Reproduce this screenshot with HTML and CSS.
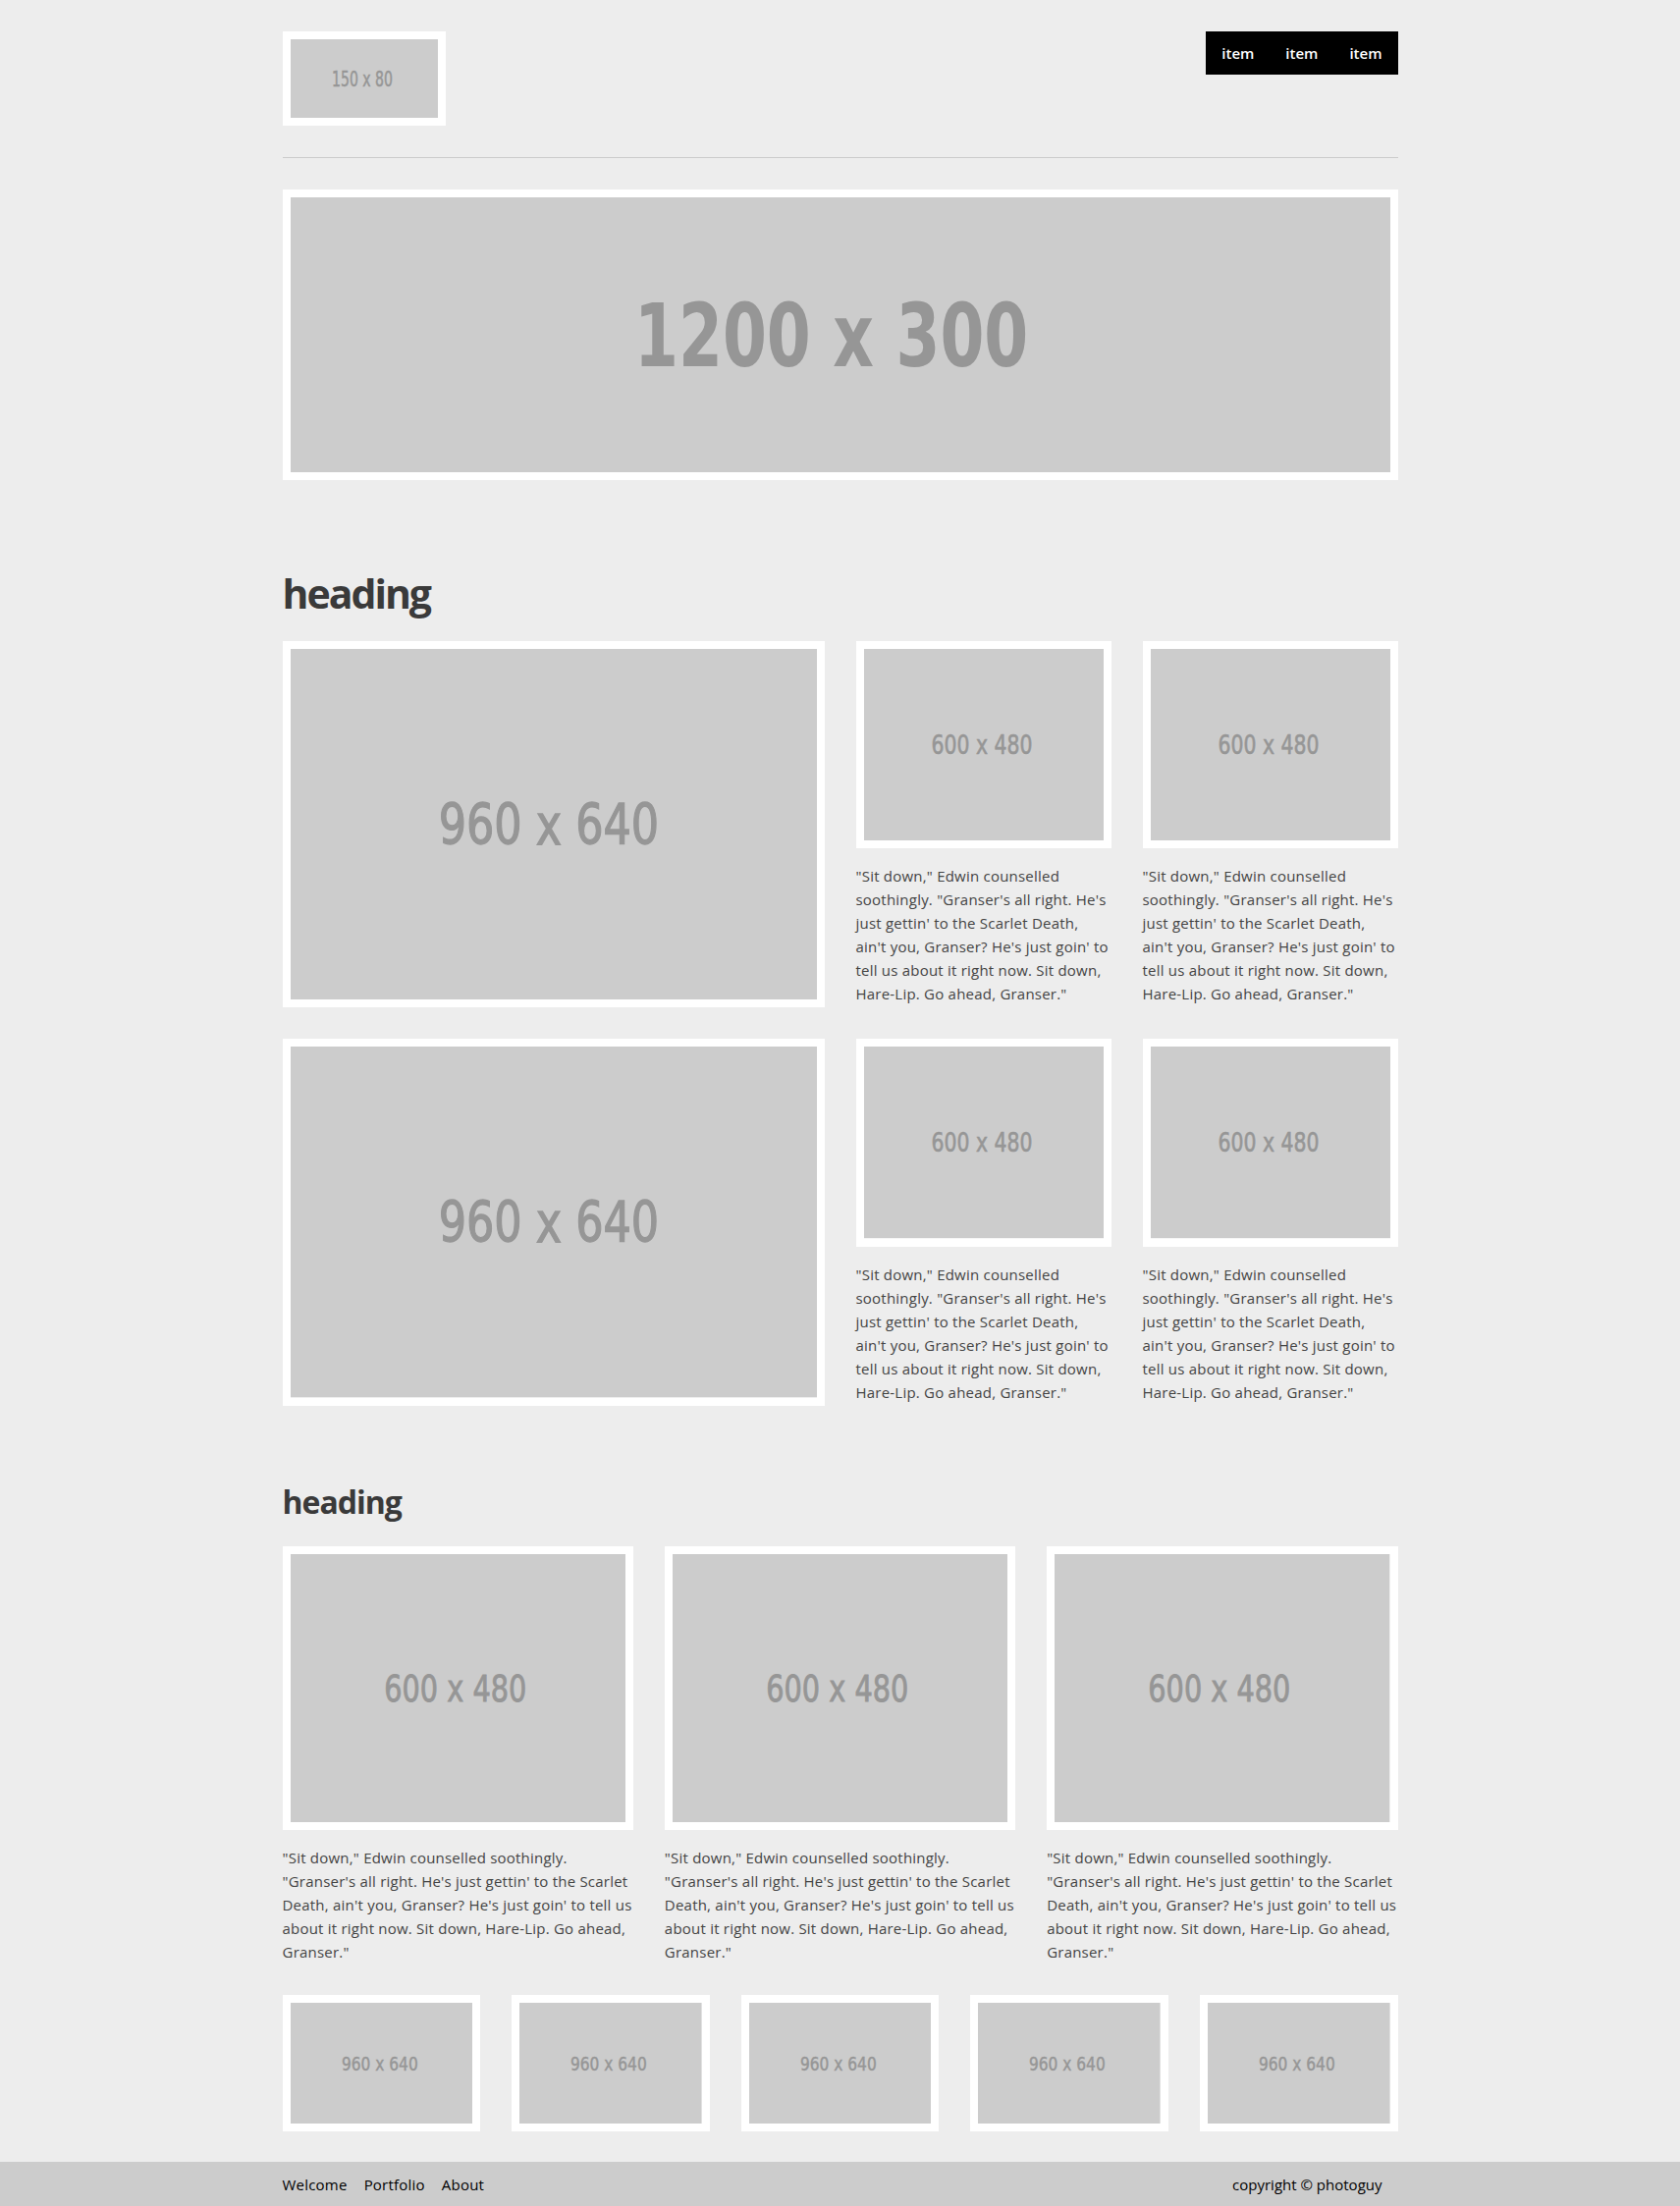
FILE: index.html
```html
<!DOCTYPE html>
<html lang="en">
<head>
<meta charset="utf-8">
<title>photoguy</title>
<link rel="stylesheet" href="styles.css">
</head>
<body>
<div class="wrap">
  <header class="site-header">
    <a class="frame logo" href="#">
      <svg class="ph" viewBox="0 0 150 80" width="150" height="80"><rect width="150" height="80" fill="#cccccc"/><text x="73" y="47.8" text-anchor="middle" font-size="21.5" textLength="62" lengthAdjust="spacingAndGlyphs" class="ph-text">150 x 80</text></svg>
    </a>
    <nav class="nav">
      <a href="#">item</a>
      <a href="#">item</a>
      <a href="#">item</a>
    </nav>
  </header>
  <hr class="rule">

  <div class="frame hero">
    <svg class="ph" viewBox="0 0 1200 300" width="1200" height="300"><rect width="1200" height="300" fill="#cccccc"/><text x="590" y="184.8" text-anchor="middle" font-size="95.5" textLength="430" lengthAdjust="spacingAndGlyphs" class="ph-text ph-bold">1200 x 300</text></svg>
  </div>

  <section class="section">
    <h1 class="title-lg">heading</h1>
    <div class="feature-rows">
      <div class="feature-row">
        <div class="frame"><svg class="ph" viewBox="0 0 960 640" width="960" height="640"><rect width="960" height="640" fill="#cccccc"/><text x="471" y="357.3" text-anchor="middle" font-size="102" textLength="402" lengthAdjust="spacingAndGlyphs" class="ph-text">960 x 640</text></svg></div>
        <div class="card">
          <div class="frame"><svg class="ph" viewBox="0 0 600 480" width="600" height="480"><rect width="600" height="480" fill="#cccccc"/><text x="295" y="264.2" text-anchor="middle" font-size="66.5" textLength="253" lengthAdjust="spacingAndGlyphs" class="ph-text">600 x 480</text></svg></div>
          <p class="caption">"Sit down," Edwin counselled soothingly. "Granser's all right. He's just gettin' to the Scarlet Death, ain't you, Granser? He's just goin' to tell us about it right now. Sit down, Hare-Lip. Go ahead, Granser."</p>
        </div>
        <div class="card">
          <div class="frame"><svg class="ph" viewBox="0 0 600 480" width="600" height="480"><rect width="600" height="480" fill="#cccccc"/><text x="295" y="264.2" text-anchor="middle" font-size="66.5" textLength="253" lengthAdjust="spacingAndGlyphs" class="ph-text">600 x 480</text></svg></div>
          <p class="caption">"Sit down," Edwin counselled soothingly. "Granser's all right. He's just gettin' to the Scarlet Death, ain't you, Granser? He's just goin' to tell us about it right now. Sit down, Hare-Lip. Go ahead, Granser."</p>
        </div>
      </div>
      <div class="feature-row">
        <div class="frame"><svg class="ph" viewBox="0 0 960 640" width="960" height="640"><rect width="960" height="640" fill="#cccccc"/><text x="471" y="357.3" text-anchor="middle" font-size="102" textLength="402" lengthAdjust="spacingAndGlyphs" class="ph-text">960 x 640</text></svg></div>
        <div class="card">
          <div class="frame"><svg class="ph" viewBox="0 0 600 480" width="600" height="480"><rect width="600" height="480" fill="#cccccc"/><text x="295" y="264.2" text-anchor="middle" font-size="66.5" textLength="253" lengthAdjust="spacingAndGlyphs" class="ph-text">600 x 480</text></svg></div>
          <p class="caption">"Sit down," Edwin counselled soothingly. "Granser's all right. He's just gettin' to the Scarlet Death, ain't you, Granser? He's just goin' to tell us about it right now. Sit down, Hare-Lip. Go ahead, Granser."</p>
        </div>
        <div class="card">
          <div class="frame"><svg class="ph" viewBox="0 0 600 480" width="600" height="480"><rect width="600" height="480" fill="#cccccc"/><text x="295" y="264.2" text-anchor="middle" font-size="66.5" textLength="253" lengthAdjust="spacingAndGlyphs" class="ph-text">600 x 480</text></svg></div>
          <p class="caption">"Sit down," Edwin counselled soothingly. "Granser's all right. He's just gettin' to the Scarlet Death, ain't you, Granser? He's just goin' to tell us about it right now. Sit down, Hare-Lip. Go ahead, Granser."</p>
        </div>
      </div>
    </div>
  </section>

  <section class="section">
    <h2 class="title-md">heading</h2>
    <div class="cols3">
      <div class="card">
        <div class="frame"><svg class="ph" viewBox="0 0 600 480" width="600" height="480"><rect width="600" height="480" fill="#cccccc"/><text x="295" y="264.2" text-anchor="middle" font-size="66.5" textLength="255" lengthAdjust="spacingAndGlyphs" class="ph-text">600 x 480</text></svg></div>
        <p class="caption">"Sit down," Edwin counselled soothingly. "Granser's all right. He's just gettin' to the Scarlet Death, ain't you, Granser? He's just goin' to tell us about it right now. Sit down, Hare-Lip. Go ahead, Granser."</p>
      </div>
      <div class="card">
        <div class="frame"><svg class="ph" viewBox="0 0 600 480" width="600" height="480"><rect width="600" height="480" fill="#cccccc"/><text x="295" y="264.2" text-anchor="middle" font-size="66.5" textLength="255" lengthAdjust="spacingAndGlyphs" class="ph-text">600 x 480</text></svg></div>
        <p class="caption">"Sit down," Edwin counselled soothingly. "Granser's all right. He's just gettin' to the Scarlet Death, ain't you, Granser? He's just goin' to tell us about it right now. Sit down, Hare-Lip. Go ahead, Granser."</p>
      </div>
      <div class="card">
        <div class="frame"><svg class="ph" viewBox="0 0 600 480" width="600" height="480"><rect width="600" height="480" fill="#cccccc"/><text x="295" y="264.2" text-anchor="middle" font-size="66.5" textLength="255" lengthAdjust="spacingAndGlyphs" class="ph-text">600 x 480</text></svg></div>
        <p class="caption">"Sit down," Edwin counselled soothingly. "Granser's all right. He's just gettin' to the Scarlet Death, ain't you, Granser? He's just goin' to tell us about it right now. Sit down, Hare-Lip. Go ahead, Granser."</p>
      </div>
    </div>
    <div class="thumbs">
      <div class="frame"><svg class="ph" viewBox="0 0 960 640" width="960" height="640"><rect width="960" height="640" fill="#cccccc"/><text x="470" y="357.3" text-anchor="middle" font-size="102" textLength="402" lengthAdjust="spacingAndGlyphs" class="ph-text">960 x 640</text></svg></div>
      <div class="frame"><svg class="ph" viewBox="0 0 960 640" width="960" height="640"><rect width="960" height="640" fill="#cccccc"/><text x="470" y="357.3" text-anchor="middle" font-size="102" textLength="402" lengthAdjust="spacingAndGlyphs" class="ph-text">960 x 640</text></svg></div>
      <div class="frame"><svg class="ph" viewBox="0 0 960 640" width="960" height="640"><rect width="960" height="640" fill="#cccccc"/><text x="470" y="357.3" text-anchor="middle" font-size="102" textLength="402" lengthAdjust="spacingAndGlyphs" class="ph-text">960 x 640</text></svg></div>
      <div class="frame"><svg class="ph" viewBox="0 0 960 640" width="960" height="640"><rect width="960" height="640" fill="#cccccc"/><text x="470" y="357.3" text-anchor="middle" font-size="102" textLength="402" lengthAdjust="spacingAndGlyphs" class="ph-text">960 x 640</text></svg></div>
      <div class="frame"><svg class="ph" viewBox="0 0 960 640" width="960" height="640"><rect width="960" height="640" fill="#cccccc"/><text x="470" y="357.3" text-anchor="middle" font-size="102" textLength="402" lengthAdjust="spacingAndGlyphs" class="ph-text">960 x 640</text></svg></div>
    </div>
  </section>
</div>

<footer class="site-footer">
  <div class="wrap footer-inner">
    <nav class="footer-links">
      <a href="#">Welcome</a>
      <a href="#">Portfolio</a>
      <a href="#">About</a>
    </nav>
    <p class="copyright">copyright © photoguy</p>
  </div>
</footer>
</body>
</html>
```

FILE: styles.css
```css
* { box-sizing: border-box; }

html, body {
  margin: 0;
  padding: 0;
}

body {
  background: #ededed;
  font-family: "Open Sans", "Noto Sans", sans-serif;
  font-size: 15px;
  line-height: 24px;
  color: #444444;
}

a { text-decoration: none; color: inherit; }

.wrap {
  width: 1136px;
  margin: 0 auto;
}

/* header */
.site-header {
  display: flex;
  justify-content: space-between;
  align-items: flex-start;
  padding-top: 32px;
}

.frame {
  display: block;
  background: #ffffff;
  padding: 8px;
}

.ph {
  display: block;
  width: 100%;
  height: auto;
}

.ph-text {
  fill: #969696;
  stroke: #969696;
  stroke-width: 0.022em;
  font-family: "DejaVu Sans Condensed", "DejaVu Sans", sans-serif;
  font-weight: normal;
}

.ph-text.ph-bold {
  font-weight: bold;
  stroke: none;
}

.logo {
  width: 166px;
}

.nav {
  display: flex;
  background: #000000;
}

.nav a {
  display: block;
  padding: 0 16px;
  line-height: 44px;
  color: #ffffff;
  font-weight: 600;
  font-size: 15px;
}

.rule {
  margin: 32px 0 0;
  border: 0;
  border-top: 1px solid #cccccc;
  height: 0;
}

.hero {
  margin-top: 32px;
}

/* headings */
.title-lg {
  margin: 95px 0 28px;
  font-size: 41px;
  line-height: 41px;
  font-weight: 700;
  letter-spacing: -2px;
  color: #3a3a3a;
}

.title-md {
  margin: 82px 0 29px;
  font-size: 32px;
  line-height: 32px;
  font-weight: 700;
  letter-spacing: -1px;
  color: #3a3a3a;
}

/* feature rows */
.feature-rows {
  display: grid;
  row-gap: 32px;
}

.feature-row {
  display: grid;
  grid-template-columns: 552px 260px 260px;
  column-gap: 32px;
  align-items: start;
}

.caption {
  margin: 16px 0 0;
  font-size: 15px;
  line-height: 24px;
  letter-spacing: 0.22px;
  color: #444444;
}

.cols3 {
  display: grid;
  grid-template-columns: repeat(3, 1fr);
  column-gap: 32px;
}

.thumbs {
  display: grid;
  grid-template-columns: repeat(5, 1fr);
  column-gap: 32px;
  margin-top: 32px;
}

/* footer */
.site-footer {
  margin-top: 31px;
  background: #cccccc;
}

.footer-inner {
  display: flex;
  justify-content: space-between;
  align-items: center;
  padding: 11px 0 10px;
}

.footer-links {
  display: flex;
  gap: 17px;
  letter-spacing: 0.22px;
}

.footer-links a {
  color: #000000;
}

.copyright {
  margin: 0;
  padding-right: 16px;
  color: #000000;
}
```
